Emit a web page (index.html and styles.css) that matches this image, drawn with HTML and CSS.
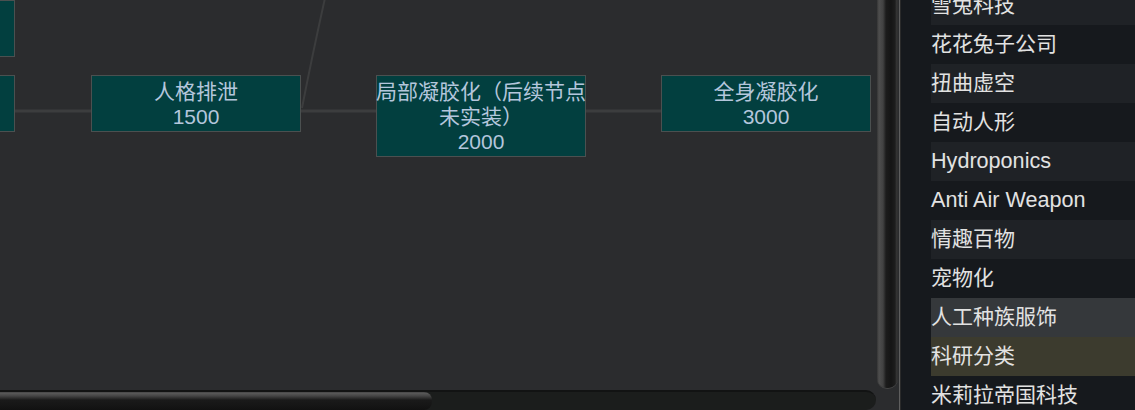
FILE: index.html
```html
<!DOCTYPE html>
<html lang="zh">
<head>
<meta charset="utf-8">
<title>Research</title>
<link rel="stylesheet" href="styles.css">
</head>
<body>
<div class="app">
  <div class="main">
    <div class="view-row">
      <div class="canvas">
        <svg class="links" width="877" height="390" viewBox="0 0 877 390">
          <g class="link">
            <line x1="15" y1="111" x2="91" y2="111"/>
            <line x1="301" y1="111" x2="376" y2="111"/>
            <line x1="585" y1="111" x2="661" y2="111"/>
          </g>
          <path class="curve" d="M302 108 C 309 72, 317 34, 325 -2"/>
        </svg>
        <div class="node" style="left:-195px;top:0px;height:57px"></div>
        <div class="node" style="left:-195px;top:75px;height:57px"></div>
        <div class="node" style="left:91px;top:75px;height:57px">人格排泄<br>1500</div>
        <div class="node" style="left:376px;top:75px;height:82px">局部凝胶化（后续节点<br>未实装）<br>2000</div>
        <div class="node" style="left:661px;top:75px;height:57px">全身凝胶化<br>3000</div>
      </div>
      <div class="vscroll"><div class="vthumb"></div></div>
    </div>
    <div class="hscroll-row">
      <div class="htrack"><div class="hthumb"></div></div>
      <div class="corner"></div>
    </div>
  </div>
  <div class="divider"></div>
  <div class="sidebar">
    <ul class="tabs">
      <li class="tab alt">雪兔科技</li>
      <li class="tab">花花兔子公司</li>
      <li class="tab alt">扭曲虚空</li>
      <li class="tab">自动人形</li>
      <li class="tab alt latin">Hydroponics</li>
      <li class="tab latin">Anti Air Weapon</li>
      <li class="tab alt">情趣百物</li>
      <li class="tab">宠物化</li>
      <li class="tab hover">人工种族服饰</li>
      <li class="tab selected">科研分类</li>
      <li class="tab">米莉拉帝国科技</li>
    </ul>
  </div>
</div>
</body>
</html>
```

FILE: styles.css
```css
* { box-sizing: border-box; }
html, body {
  margin: 0;
  padding: 0;
  width: 1135px;
  height: 410px;
  overflow: hidden;
  background: #2b2c2e;
}
body {
  font-family: "Liberation Sans", Arial, "Noto Sans CJK SC", sans-serif;
}
.app {
  display: flex;
  width: 1135px;
  height: 410px;
}
.main {
  width: 899px;
  display: flex;
  flex-direction: column;
}
.view-row {
  display: flex;
  height: 390px;
}
.canvas {
  position: relative;
  width: 877px;
  height: 390px;
  overflow: hidden;
  background: #2b2c2e;
}
.links {
  position: absolute;
  left: 0;
  top: 0;
}
.link line {
  stroke: #3c3d3e;
  stroke-width: 3;
}
.curve {
  fill: none;
  stroke: #3c3d3e;
  stroke-width: 2;
}
.node {
  position: absolute;
  width: 210px;
  background: #023f3f;
  border: 1px solid #4b5050;
  color: #b4c6dc;
  font-size: 21px;
  line-height: 25px;
  text-align: center;
  white-space: nowrap;
  display: flex;
  align-items: center;
  justify-content: center;
}
.vscroll {
  width: 22px;
  height: 390px;
  background: #2b2c2e;
}
.vthumb {
  width: 21px;
  height: 388px;
  border-radius: 0 0 10px 10px;
  background: linear-gradient(to right, #353535 0, #4e4e4e 2px, #424242 6px, #1c1c1c 9px, #151515 14px, #1d1d1d 18px, #3a3a3a 20px, #262626 21px);
  box-shadow: 0 1px 0 #444;
}
.hscroll-row {
  display: flex;
  height: 20px;
}
.htrack {
  width: 876px;
  height: 20px;
  background: #1b1d1c;
  border-top: 2px solid #121313;
  border-radius: 0 10px 10px 0;
  overflow: hidden;
}
.hthumb {
  width: 432px;
  height: 18px;
  border-radius: 0 8px 8px 0;
  background: linear-gradient(to bottom, #3e3e3e 0, #5a5a5a 1px, #444 4px, #1a1a1a 8px, #151515 14px, #111 18px);
}
.corner {
  flex: 1;
  background: #2b2c2e;
}
.divider {
  width: 2px;
  background: #5e5e5e;
  border-right: 1px solid #2a2a2a;
}
.sidebar {
  flex: 1;
  background: #16191d;
  overflow: hidden;
}
.tabs {
  list-style: none;
  margin: -14px 0 0 30px;
  padding: 0;
}
.tab {
  height: 39px;
  line-height: 38px;
  font-size: 21px;
  color: #e2e2e2;
  white-space: nowrap;
}
.tab.latin { font-size: 21.6px; }
.tab.alt { background: #1f2226; }
.tab.hover { background: #35383b; }
.tab.selected { background: #3c3b2e; }
```
